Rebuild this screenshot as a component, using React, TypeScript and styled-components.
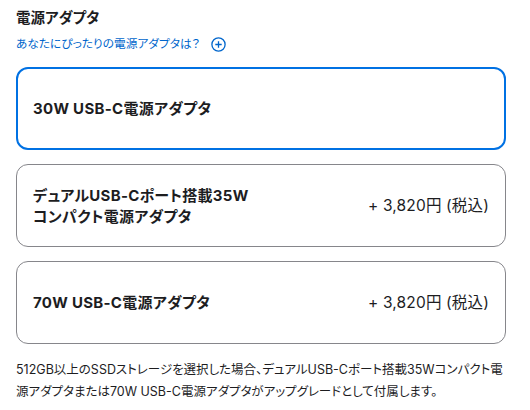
import React from "react";
import styled, { createGlobalStyle } from "styled-components";

const GlobalStyle = createGlobalStyle`
  body {
    margin: 0;
    background: #ffffff;
    font-family: Inter, "Noto Sans CJK JP", sans-serif;
    font-feature-settings: "palt";
    color: #1d1d1f;
  }
`;

interface iOption {
  label: string[];
  price?: string;
}

const options: iOption[] = [
  { label: ["30W USB-C電源アダプタ"] },
  { label: ["デュアルUSB-Cポート搭載35W", "コンパクト電源アダプタ"], price: "+ 3,820円 (税込)" },
  { label: ["70W USB-C電源アダプタ"], price: "+ 3,820円 (税込)" },
];

function App() {
  return (
    <Container>
      <GlobalStyle />
      <Title>電源アダプタ</Title>
      <HelpLink>
        あなたにぴったりの電源アダプタは？
        <svg width="15" height="15" viewBox="0 0 15 15" fill="none">
          <circle cx="7.5" cy="7.5" r="6.6" stroke="#0066cc" strokeWidth="1.3" />
          <path d="M7.5 4.3v6.4M4.3 7.5h6.4" stroke="#0066cc" strokeWidth="1.3" />
        </svg>
      </HelpLink>
      <List>
        {options.map((o, i) => (
          <Card key={i} selected={i === 0}>
            <Name>
              {o.label.map((l) => (
                <div key={l}>{l}</div>
              ))}
            </Name>
            {o.price && <Price>{o.price}</Price>}
          </Card>
        ))}
      </List>
      <Note>
        512GB以上のSSDストレージを選択した場合、デュアルUSB-Cポート搭載35Wコンパクト電源アダプタまたは70W USB-C電源アダプタがアップグレードとして付属します。
      </Note>
    </Container>
  );
}

export default App;

const Container = styled.div`
  width: 490px;
  padding: 8px 16px 0;
`;

const Title = styled.h3`
  margin: 0;
  font-size: 14.5px;
  font-weight: 700;
  line-height: 20px;
`;

const HelpLink = styled.div`
  margin-top: 8px;
  display: flex;
  align-items: center;
  gap: 11px;
  font-size: 11.7px;
  line-height: 16px;
  color: #0066cc;
`;

const List = styled.div`
  margin-top: 15px;
  display: flex;
  flex-direction: column;
  gap: 14px;
`;

const Card = styled.div<{ selected?: boolean }>`
  box-sizing: border-box;
  height: 83px;
  display: flex;
  align-items: center;
  justify-content: space-between;
  padding: 0 16px;
  border-radius: 12px;
  border: ${(p) => (p.selected ? "2px solid #0071e3" : "1px solid #86868b")};
  padding-left: ${(p) => (p.selected ? "15px" : "16px")};
`;

const Name = styled.div`
  font-size: 15px;
  font-weight: 700;
  line-height: 21px;
  letter-spacing: 0.02em;
`;

const Price = styled.div`
  font-size: 15.5px;
  line-height: 21px;
  letter-spacing: 0.01em;
`;

const Note = styled.p`
  margin: 15px 0 0;
  font-size: 12.5px;
  line-height: 22px;
  color: #1d1d1f;
`;
